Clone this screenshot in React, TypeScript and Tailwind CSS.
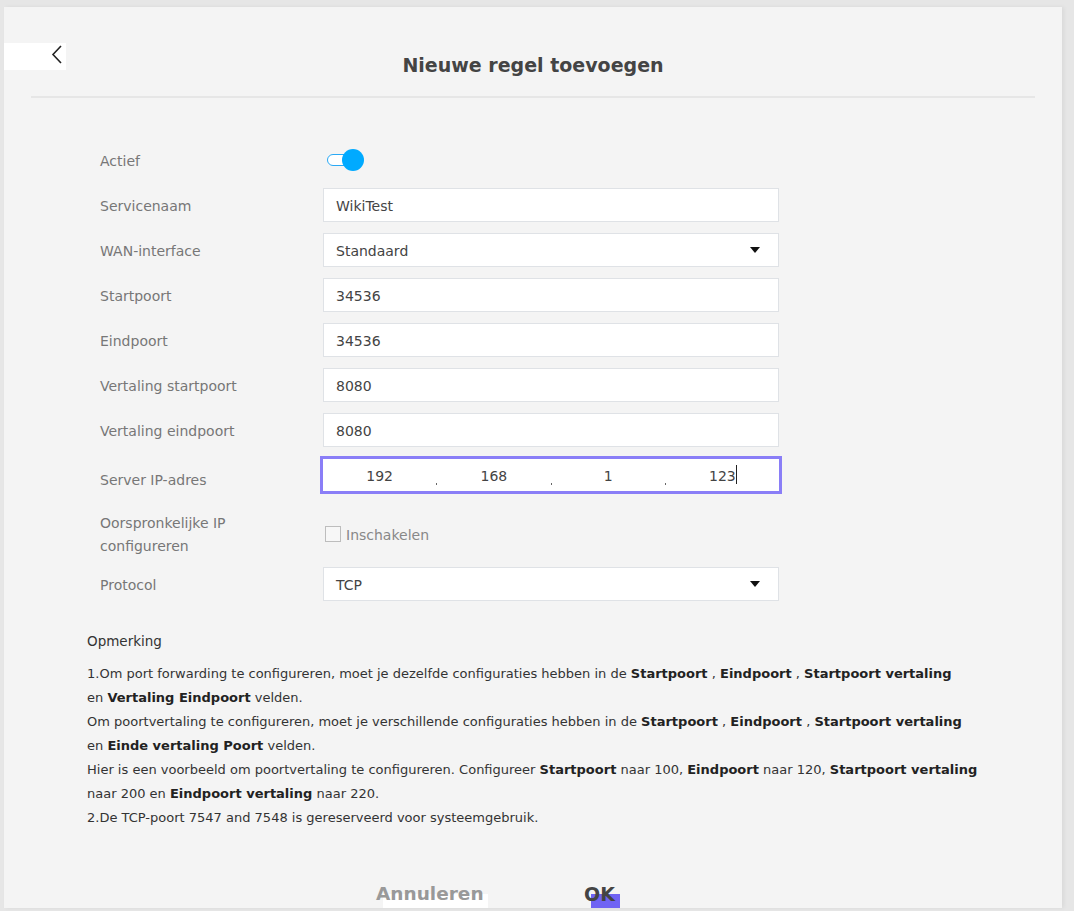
import React from "react";

const font = { fontFamily: '"DejaVu Sans", "Liberation Sans", sans-serif' };

function Arrow() {
  return (
    <svg width="10" height="7" viewBox="0 0 10 7" className="shrink-0">
      <path d="M0 0 H10 L5 6 Z" fill="#111" />
    </svg>
  );
}

function Row({ label, children, h = "h-[34px]" }: { label: React.ReactNode; children: React.ReactNode; h?: string }) {
  return (
    <div className={`flex items-center ${h}`}>
      <div className="w-[223px] shrink-0 text-[14px] text-[#777] leading-[23px] pt-[2px]">{label}</div>
      <div className="flex-1">{children}</div>
    </div>
  );
}

function TextBox({ value }: { value: string }) {
  return (
    <div className="h-[34px] w-[456px] bg-white border border-[#dfe2e6] flex items-center px-3 pt-[2px] text-[14px] text-[#444]">
      {value}
    </div>
  );
}

function SelectBox({ value }: { value: string }) {
  return (
    <div className="h-[34px] w-[456px] bg-white border border-[#dfe2e6] flex items-center justify-between pl-3 pr-[18px] text-[14px] text-[#444]">
      <span className="pt-[2px]">{value}</span>
      <Arrow />
    </div>
  );
}

function Seg({ v, caret }: { v: string; caret?: boolean }) {
  return (
    <div className="flex-1 flex items-center justify-center text-[14px] text-[#444] pt-[2px]">
      <span className="relative">
        {v}
        {caret && <span className="absolute -right-px top-[-1px] h-[19px] w-px bg-[#222]" />}
      </span>
    </div>
  );
}

function Dot() {
  return <div className="w-px self-end mb-[6px] h-[2px] bg-[#666]" />;
}

export default function App() {
  return (
    <div className="w-[1074px] h-[911px] bg-[#e6e6e6] overflow-hidden" style={font}>
      <div className="ml-[4px] mt-[7px] w-[1058px] h-[901px] bg-[#f4f4f4] overflow-hidden shadow-[2px_0_4px_rgba(0,0,0,0.06)]">
        {/* header */}
        <div className="relative h-[89px]">
          <div className="absolute left-0 top-[36px] w-[62px] h-[27px] bg-white flex items-start justify-end pr-[3px] pt-[2px]">
            <svg width="12" height="19" viewBox="0 0 12 19">
              <path d="M10 1 L2 9.5 L10 18" fill="none" stroke="#222" strokeWidth="1.6" />
            </svg>
          </div>
          <div className="pt-[45px] text-center text-[19px] font-bold text-[#444] leading-[26px]">
            Nieuwe regel toevoegen
          </div>
        </div>
        <div className="mx-[27px] h-[2px] bg-[#e6e6e6]" />

        {/* form */}
        <div className="pl-[96px] pt-[45px] flex flex-col">
          <Row label="Actief">
            <div className="relative w-[36px] h-[22px] ml-[4px]">
              <div className="absolute left-0 top-[5px] w-[26px] h-[12px] rounded-full border-[1.5px] border-[#2aa9f5] bg-white" />
              <div className="absolute left-[15px] top-0 w-[22px] h-[22px] rounded-full bg-[#00aaff]" />
            </div>
          </Row>
          <div className="h-[11px]" />
          <Row label="Servicenaam"><TextBox value="WikiTest" /></Row>
          <div className="h-[11px]" />
          <Row label="WAN-interface"><SelectBox value="Standaard" /></Row>
          <div className="h-[11px]" />
          <Row label="Startpoort"><TextBox value="34536" /></Row>
          <div className="h-[11px]" />
          <Row label="Eindpoort"><TextBox value="34536" /></Row>
          <div className="h-[11px]" />
          <Row label="Vertaling startpoort"><TextBox value="8080" /></Row>
          <div className="h-[11px]" />
          <Row label="Vertaling eindpoort"><TextBox value="8080" /></Row>
          <div className="h-[12px]" />
          <Row label={<span className="relative top-[4px]">Server IP-adres</span>} h="h-[32px]">
            <div className="h-[32px] w-[456px] bg-white flex items-stretch shadow-[0_0_0_3px_#8a7ef7]">
              <Seg v="192" />
              <Dot />
              <Seg v="168" />
              <Dot />
              <Seg v="1" />
              <Dot />
              <Seg v="123" caret />
            </div>
          </Row>
          <div className="h-[20px]" />
          <Row
            h="h-[46px]"
            label={
              <span className="block">
                Oorspronkelijke IP
                <br />
                configureren
              </span>
            }
          >
            <div className="flex items-center gap-[5px] ml-[2px]">
              <div className="w-[16px] h-[16px] border border-[#bdbdbd] bg-[#f7f7f7]" />
              <span className="text-[14px] text-[#888] pt-[2px]">Inschakelen</span>
            </div>
          </Row>
          <div className="h-[10px]" />
          <Row label="Protocol"><SelectBox value="TCP" /></Row>
        </div>

        {/* notes */}
        <div className="pl-[83px] pt-[28px] text-[13px] text-[#333] leading-[24px] whitespace-nowrap">
          <div className="text-[13.5px]">Opmerking</div>
          <div className="h-[9px]" />
          <div>
            1.Om port forwarding te configureren, moet je dezelfde configuraties hebben in de <b className="text-[#222]">Startpoort</b> , <b className="text-[#222]">Eindpoort</b> , <b className="text-[#222]">Startpoort vertaling</b>
          </div>
          <div>
            en <b className="text-[#222]">Vertaling Eindpoort</b> velden.
          </div>
          <div>
            Om poortvertaling te configureren, moet je verschillende configuraties hebben in de <b className="text-[#222]">Startpoort</b> , <b className="text-[#222]">Eindpoort</b> , <b className="text-[#222]">Startpoort vertaling</b>
          </div>
          <div>
            en <b className="text-[#222]">Einde vertaling Poort</b> velden.
          </div>
          <div>
            Hier is een voorbeeld om poortvertaling te configureren. Configureer <b className="text-[#222]">Startpoort</b> naar 100, <b className="text-[#222]">Eindpoort</b> naar 120, <b className="text-[#222]">Startpoort vertaling</b>
          </div>
          <div>
            naar 200 en <b className="text-[#222]">Eindpoort vertaling</b> naar 220.
          </div>
          <div>2.De TCP-poort 7547 and 7548 is gereserveerd voor systeemgebruik.</div>
        </div>

        {/* buttons */}
        <div className="pt-[51px] flex pl-[372px]">
          <div className="relative w-[112px]">
            <div className="absolute left-[7px] top-[13px] w-[105px] h-[20px] bg-white" />
            <div className="relative text-[18.5px] font-bold text-[#999] leading-[26px]">Annuleren</div>
          </div>
          <div className="relative ml-[96px]">
            <div className="absolute left-[7px] top-[13px] w-[29px] h-[20px] bg-[#6f63f3]" />
            <div className="relative text-[19px] font-bold text-[#444] leading-[26px]">OK</div>
          </div>
        </div>
      </div>
    </div>
  );
}
